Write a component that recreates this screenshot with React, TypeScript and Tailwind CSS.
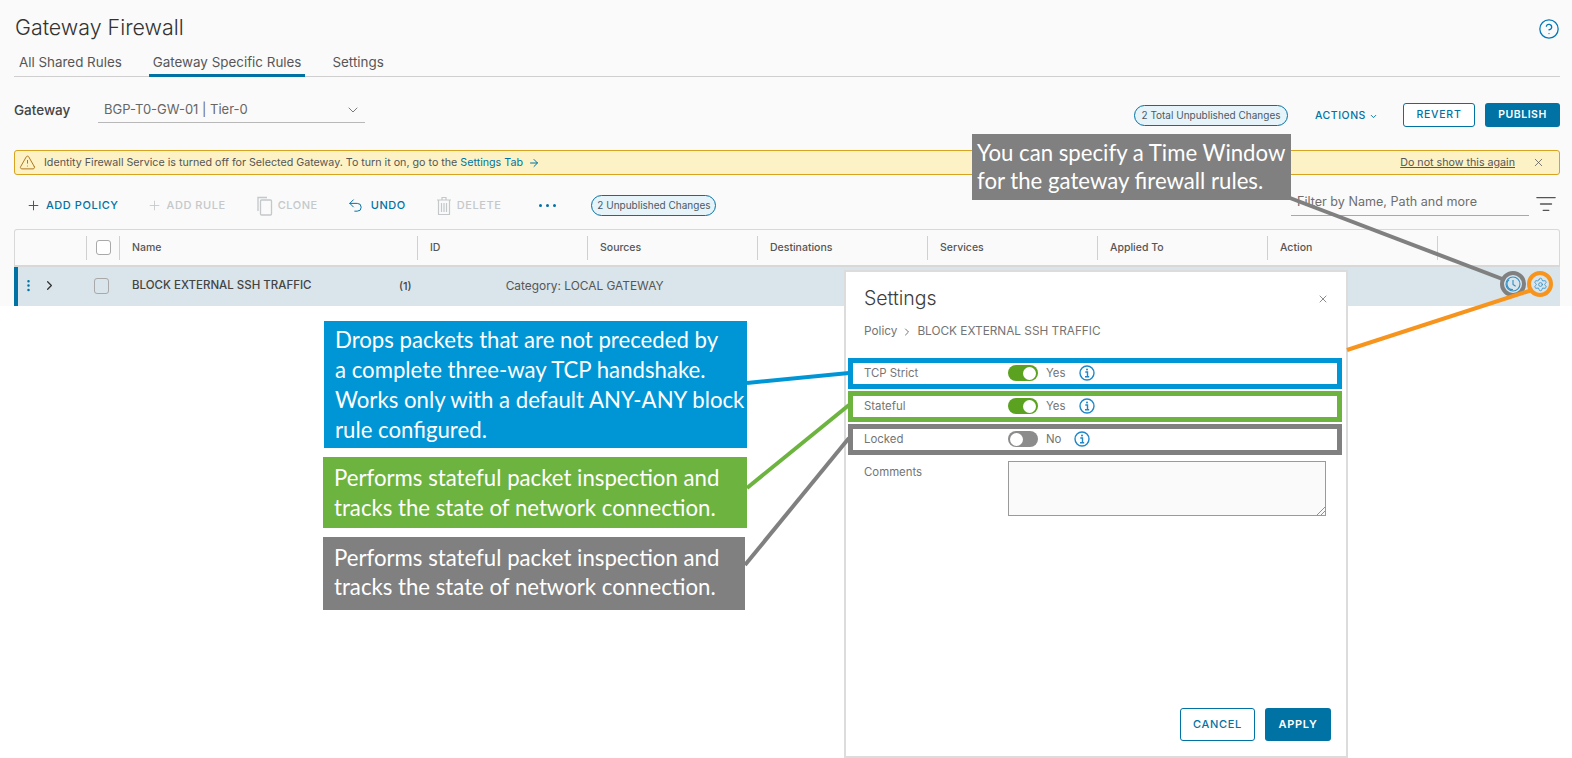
import React from 'react';
import {
  ArrowRight,
  ChevronDown,
  ChevronRight,
  CircleHelp,
  EllipsisVertical,
  ListFilter,
  Plus,
  Settings,
  TriangleAlert,
  Undo2,
  X,
} from 'lucide-react';

const COLUMNS = [
  { label: 'Name', width: 'w-[298px]' },
  { label: 'ID', width: 'w-[170px]' },
  { label: 'Sources', width: 'w-[170px]' },
  { label: 'Destinations', width: 'w-[170px]' },
  { label: 'Services', width: 'w-[170px]' },
  { label: 'Applied To', width: 'w-[170px]' },
  { label: 'Action', width: 'w-[170px]' },
];

function CloneIcon() {
  return (
    <svg width="16" height="20" viewBox="0 0 16 20" fill="none" stroke="currentColor" strokeWidth="1.3">
      <path d="M1 15V1.5h9" />
      <rect x="3.5" y="4" width="11" height="15" rx="1" />
    </svg>
  );
}

function TrashIcon() {
  return (
    <svg width="16" height="20" viewBox="0 0 16 20" fill="none" stroke="currentColor" strokeWidth="1.2">
      <path d="M1 4h14M6 4V1.5h4V4M2.5 4v14.5h11V4M5.5 7v9M8 7v9M10.5 7v9" />
    </svg>
  );
}

function InfoIcon() {
  return (
    <svg width="16" height="16" viewBox="0 0 16 16" fill="none" stroke="#1f87c8" strokeWidth="1.4">
      <circle cx="8" cy="8" r="7" />
      <circle cx="8" cy="4.4" r="1" fill="#1f87c8" stroke="none" />
      <path d="M6.3 7h2.2v4.6M6 11.7h4.2" />
    </svg>
  );
}

function ClockIcon() {
  return (
    <svg width="16" height="16" viewBox="0 0 16 16" fill="none" stroke="#2f8fc4" strokeWidth="1.1">
      <circle cx="8" cy="8" r="7" />
      <path d="M4.2 3.6A5.6 5.6 0 0 0 8 13.6" />
      <path d="M8 4v4.4l2.6 1.8" />
    </svg>
  );
}

function ToolButton({ icon, label, disabled }: { icon: React.ReactNode; label: string; disabled?: boolean }) {
  return (
    <div className={`flex items-center gap-[5px] text-[11px] font-medium tracking-[0.05em] ${disabled ? 'text-[#c4c8ca]' : 'text-[#0072a3]'}`}>
      {icon}
      <span>{label}</span>
    </div>
  );
}

function Pill({ children, className }: { children: React.ReactNode; className: string }) {
  return (
    <div className={`flex h-[21px] items-center justify-center rounded-full border border-[#0072a3] bg-[#e6f3f9] text-[10px] text-[#4d5a60] ${className}`}>
      {children}
    </div>
  );
}

function SettingRow({ label, on, boxClass }: { label: string; on: boolean; boxClass: string }) {
  return (
    <div className={`flex h-[31px] items-center border-[5px] bg-white ${boxClass}`}>
      <span className="ml-[11px] w-[144px] text-[11.4px] text-[#747474]">{label}</span>
      <div className={`flex h-[16px] w-[30px] items-center rounded-full px-[2px] ${on ? 'justify-end bg-[#5aa220]' : 'justify-start bg-[#8c8c8c]'}`}>
        <span className="h-[13px] w-[13px] rounded-full bg-white" />
      </div>
      <span className="ml-[8px] mr-[13px] text-[11.4px] text-[#747474]">{on ? 'Yes' : 'No'}</span>
      <InfoIcon />
    </div>
  );
}

function SettingsPanel() {
  return (
    <div className="absolute left-[844px] top-[270px] flex h-[488px] w-[504px] flex-col border-2 border-[#dcdcdc] bg-white">
      <div className="mt-[12px] flex items-center justify-between pl-[18px] pr-[17px]">
        <span className="text-[19.5px] font-light text-[#3d3d3d]">Settings</span>
        <X size={12} strokeWidth={1.5} className="text-[#666666]" />
      </div>
      <div className="mt-[10px] flex items-center gap-[4px] pl-[18px] text-[11.8px] text-[#747474]">
        <span>Policy</span>
        <ChevronRight size={12} />
        <span>BLOCK EXTERNAL SSH TRAFFIC</span>
      </div>
      <div className="mt-[17px] flex flex-col gap-[2px] pl-[2px] pr-[4px]">
        <SettingRow label="TCP Strict" on boxClass="border-[#0096d6]" />
        <SettingRow label="Stateful" on boxClass="border-[#6db33f]" />
        <SettingRow label="Locked" on={false} boxClass="border-[#808080]" />
      </div>
      <div className="mt-[6px] flex items-start pl-[18px]">
        <span className="mt-[3px] w-[144px] text-[11.4px] text-[#747474]">Comments</span>
        <div className="relative h-[55px] w-[318px] border border-[#9a9a9a] bg-[#fafafa]">
          <svg className="absolute bottom-0 right-0" width="9" height="9" viewBox="0 0 9 9" stroke="#777777" strokeWidth="0.8">
            <path d="M1 9L9 1M5 9L9 5" />
          </svg>
        </div>
      </div>
      <div className="mt-auto mb-[15px] flex justify-end gap-[10px] pr-[15px]">
        <div className="flex h-[33px] w-[75px] items-center justify-center rounded-[3px] border border-[#0072a3] text-[11px] font-medium tracking-[0.06em] text-[#0072a3]">CANCEL</div>
        <div className="flex h-[33px] w-[66px] items-center justify-center rounded-[3px] bg-[#0072a3] text-[11px] font-semibold tracking-[0.06em] text-white">APPLY</div>
      </div>
    </div>
  );
}

function Callout({ className, lines }: { className: string; lines: string[] }) {
  return (
    <div className={`absolute flex flex-col justify-center text-[22.2px] text-white font-['Lato',sans-serif] ${className}`}>
      {lines.map((line) => (
        <div key={line} className="whitespace-nowrap">{line}</div>
      ))}
    </div>
  );
}

export default function App() {
  return (
    <div className="relative h-[758px] w-[1572px] overflow-hidden bg-white font-['Inter',sans-serif] text-[#565656]">
      <div className="flex h-[306px] flex-col bg-[#fafafa] pl-[14px] pr-[12px]">
        <div className="flex h-[50px] items-center justify-between pt-[4px]">
          <h1 className="pl-[1px] text-[21.4px] font-light text-[#333333]">Gateway Firewall</h1>
          <CircleHelp size={22} strokeWidth={1.4} className="mt-[4px] text-[#0079b8]" />
        </div>
        <div className="flex h-[28px] items-start gap-[27px] border-b border-[#cfcfcf] text-[13.4px]">
          <span className="pl-[5px] pt-[3px]">All Shared Rules</span>
          <span className="h-[28px] border-b-[3px] border-[#0072a3] px-[4px] pt-[3px]">Gateway Specific Rules</span>
          <span className="pt-[3px]">Settings</span>
        </div>
        <div className="mt-[21px] flex h-[24px] items-center">
          <span className="w-[84px] text-[13.5px] font-medium text-[#444444]">Gateway</span>
          <div className="flex h-[25px] w-[267px] items-center justify-between border-b border-[#b8b8b8] pl-[6px] pr-[4px] text-[13px] text-[#666666]">
            <span>BGP-T0-GW-01 | Tier-0</span>
            <ChevronDown size={16} strokeWidth={1.3} />
          </div>
          <div className="ml-auto mt-[10px] flex items-center">
            <Pill className="w-[154px]">2 Total Unpublished Changes</Pill>
            <div className="ml-[27px] flex w-[65px] items-center gap-[3px] pt-[2px] text-[10.5px] font-medium tracking-[0.05em] text-[#0072a3]">
              ACTIONS
              <ChevronDown size={9} strokeWidth={2.5} />
            </div>
            <div className="ml-[23px] flex h-[24px] w-[72px] items-center justify-center rounded-[3px] border border-[#0072a3] bg-white text-[10.5px] font-medium tracking-[0.07em] text-[#0072a3]">REVERT</div>
            <div className="ml-[10px] flex h-[24px] w-[75px] items-center justify-center rounded-[3px] bg-[#0072a3] text-[10.5px] font-semibold tracking-[0.05em] text-white">PUBLISH</div>
          </div>
        </div>
        <div className="mt-[28px] flex h-[25px] items-center rounded-[3px] border border-[#d8a31f] bg-[#fdf2c5] pt-[1px] text-[10.7px]">
          <TriangleAlert size={17} strokeWidth={1.3} className="ml-[4px] text-[#a86c10]" />
          <span className="ml-[8px]">Identity Firewall Service is turned off for Selected Gateway. To turn it on, go to the</span>
          <span className="ml-[3px] text-[#0072a3]">Settings Tab</span>
          <ArrowRight size={12} className="ml-[5px] text-[#0072a3]" />
          <span className="ml-auto underline">Do not show this again</span>
          <X size={13} strokeWidth={1.4} className="ml-[17px] mr-[14px]" />
        </div>
        <div className="mt-[19px] flex h-[24px] items-center pl-[12px]">
          <ToolButton icon={<Plus size={15} strokeWidth={1.6} />} label="ADD POLICY" />
          <div className="ml-[28px]"><ToolButton disabled icon={<Plus size={15} strokeWidth={1.4} />} label="ADD RULE" /></div>
          <div className="ml-[31px]"><ToolButton disabled icon={<CloneIcon />} label="CLONE" /></div>
          <div className="ml-[29px]"><ToolButton icon={<Undo2 size={17} strokeWidth={1.4} className="mr-[2px]" />} label="UNDO" /></div>
          <div className="ml-[30px]"><ToolButton disabled icon={<TrashIcon />} label="DELETE" /></div>
          <div className="ml-[38px] flex gap-[4px]">
            <span className="h-[3px] w-[3px] rounded-full bg-[#0072a3]" />
            <span className="h-[3px] w-[3px] rounded-full bg-[#0072a3]" />
            <span className="h-[3px] w-[3px] rounded-full bg-[#0072a3]" />
          </div>
          <Pill className="ml-[35px] w-[125px]">2 Unpublished Changes</Pill>
          <div className="ml-auto -mt-[6px] flex h-[26px] w-[238px] items-center border-b border-[#a8a8a8] pl-[6px] text-[12.6px] text-[#6e6e6e]">Filter by Name, Path and more</div>
          <ListFilter size={22} strokeWidth={1.4} className="ml-[6px] mr-[3px] -mt-[3px] text-[#555555]" />
        </div>
        <div className="mt-[12px] flex h-[38px] items-center rounded-t-[3px] border border-b-2 border-[#d8d8d8] bg-[#fafafa] text-[10.5px] font-medium text-[#565656]">
          <div className="h-[24px] w-[72px] border-r border-[#d0d0d0]" />
          <div className="flex h-[24px] w-[33px] items-center justify-center border-r border-[#d0d0d0]">
            <span className="h-[15px] w-[15px] rounded-[3px] border border-[#a9a9a9] bg-white" />
          </div>
          {COLUMNS.map((col) => (
            <div key={col.label} className={`flex h-[24px] items-center border-r border-[#d0d0d0] pl-[12px] ${col.width}`}>{col.label}</div>
          ))}
        </div>
        <div className="flex h-[40px] items-center border-l-[4px] border-[#0072a3] bg-[#d9e4eb] pb-[1px]">
          <EllipsisVertical size={15} className="ml-[3px] text-[#0072a3]" />
          <ChevronRight size={15} strokeWidth={2} className="ml-[6px] text-[#333333]" />
          <span className="ml-[37px] h-[16px] w-[15px] rounded-[3px] border border-[#a9a9a9] bg-[#d9e4eb]" />
          <span className="ml-[23px] w-[267px] text-[11.5px] font-medium text-[#444444]">BLOCK EXTERNAL SSH TRAFFIC</span>
          <span className="text-[11px] font-medium text-[#444444]">(1)</span>
          <span className="ml-[94px] text-[11.9px] text-[#565656]">Category: LOCAL GATEWAY</span>
        </div>
      </div>

      <SettingsPanel />

      <svg className="absolute left-0 top-0" width="1572" height="758" fill="none">
        <line x1="1290" y1="198" x2="1505" y2="280" stroke="#808080" strokeWidth="4" />
        <circle cx="1513" cy="284" r="11" stroke="#808080" strokeWidth="4" />
        <line x1="747" y1="383" x2="849" y2="373" stroke="#0096d6" strokeWidth="4" />
        <line x1="747" y1="488" x2="849" y2="405" stroke="#6db33f" strokeWidth="4" />
        <line x1="745" y1="565" x2="849" y2="438" stroke="#808080" strokeWidth="4" />
        <line x1="1347" y1="350" x2="1532" y2="290" stroke="#f7941d" strokeWidth="4" />
        <circle cx="1540" cy="284" r="11" stroke="#f7941d" strokeWidth="4" />
      </svg>
      <div className="absolute left-[1505px] top-[276px]"><ClockIcon /></div>
      <Settings size={15} strokeWidth={1.3} className="absolute left-[1533px] top-[277px] text-[#2f8fc4]" />

      <Callout className="left-[972px] top-[134px] h-[66px] w-[319px] bg-[#808080] pl-[5px] leading-[28px]" lines={['You can specify a Time Window', 'for the gateway firewall rules.']} />
      <Callout className="left-[324px] top-[321px] h-[127px] w-[423px] bg-[#0096d6] pl-[11px] leading-[30px]" lines={['Drops packets that are not preceded by', 'a complete three-way TCP handshake.', 'Works only with a default ANY-ANY block', 'rule configured.']} />
      <Callout className="left-[323px] top-[457px] h-[71px] w-[424px] bg-[#6db33f] pl-[11px] leading-[30px]" lines={['Performs stateful packet inspection and', 'tracks the state of network connection.']} />
      <Callout className="left-[323px] top-[537px] h-[73px] w-[422px] bg-[#808080] pb-[3px] pl-[11px] leading-[29px]" lines={['Performs stateful packet inspection and', 'tracks the state of network connection.']} />
    </div>
  );
}
